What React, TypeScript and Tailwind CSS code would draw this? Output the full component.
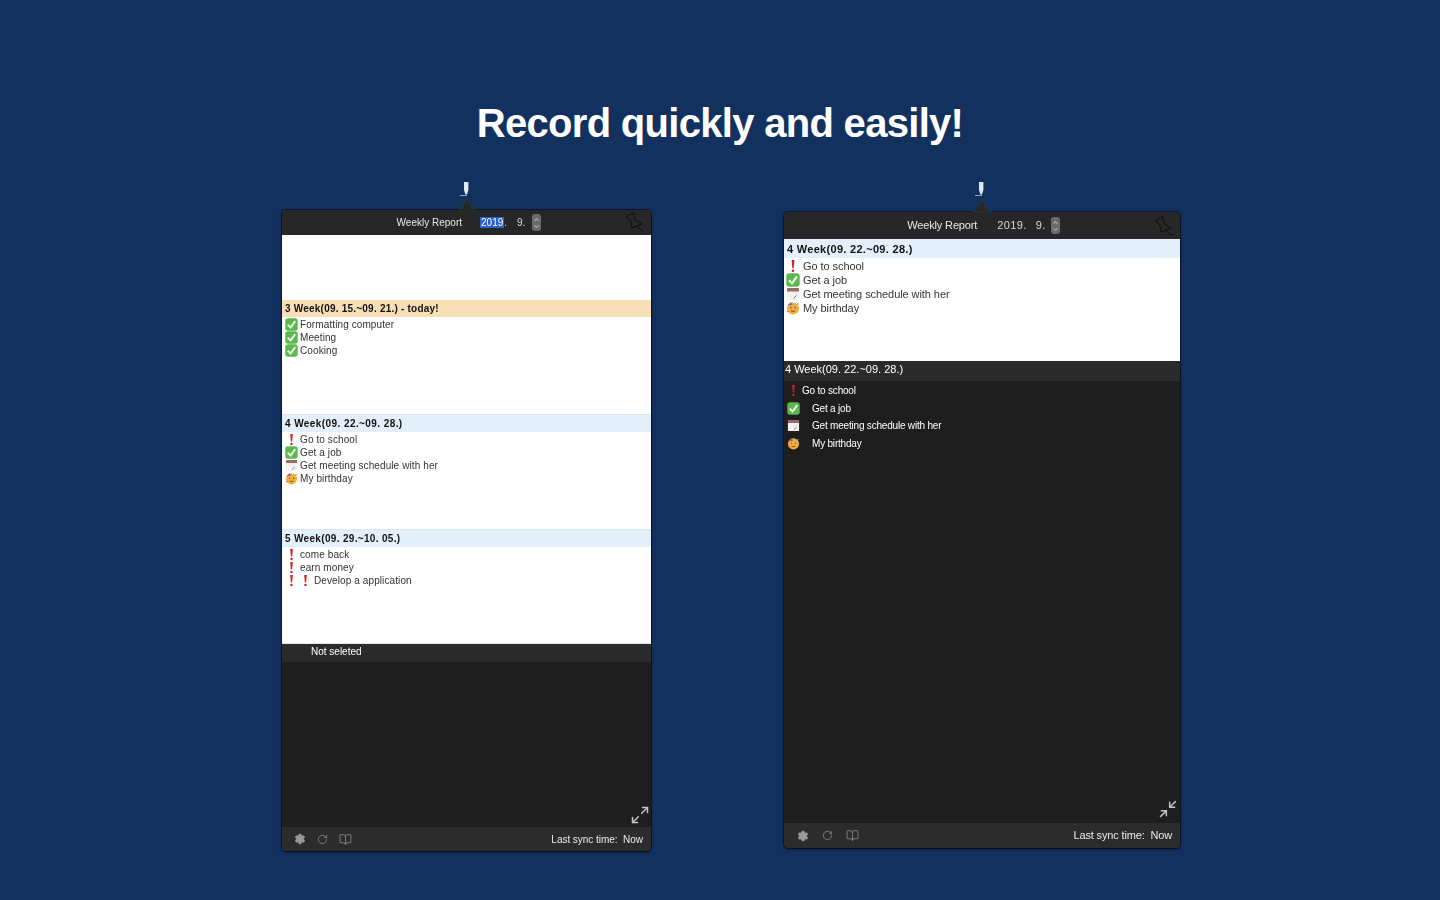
import { ReactNode } from "react";
import { BookOpen, ChevronDown, ChevronUp, Maximize2, Minimize2, RotateCw, Settings } from "lucide-react";

type Mark = "alert" | "check" | "calendar" | "party";

interface Task {
  marks: Mark[];
  text: string;
}

const THIRD_WEEK: Task[] = [
  { marks: ["check"], text: "Formatting computer" },
  { marks: ["check"], text: "Meeting" },
  { marks: ["check"], text: "Cooking" },
];

const FOURTH_WEEK: Task[] = [
  { marks: ["alert"], text: "Go to school" },
  { marks: ["check"], text: "Get a job" },
  { marks: ["calendar"], text: "Get meeting schedule with her" },
  { marks: ["party"], text: "My birthday" },
];

const FIFTH_WEEK: Task[] = [
  { marks: ["alert"], text: "come back" },
  { marks: ["alert"], text: "earn money" },
  { marks: ["alert", "alert"], text: "Develop a application" },
];

function MarkIcon({ mark, size }: { mark: Mark; size: number }) {
  if (mark === "alert") {
    return (
      <svg width={size} height={size} viewBox="0 0 14 14">
        <path d="M5.6 1h2.8L7.7 9.2H6.3z" fill="#dd1f1f" />
        <circle cx="7" cy="11.8" r="1.3" fill="#dd1f1f" />
      </svg>
    );
  }
  if (mark === "check") {
    return (
      <svg width={size} height={size} viewBox="0 0 14 14">
        <rect x="0.3" y="0.3" width="13.4" height="13.4" rx="3" fill="#5ab84d" />
        <path d="M3 7.2l3 3.2 5-7" fill="none" stroke="#f4fff0" strokeWidth="2" />
      </svg>
    );
  }
  if (mark === "calendar") {
    return (
      <svg width={size} height={size} viewBox="0 0 14 14">
        <rect x="1" y="1" width="12" height="12" rx="1" fill="#f2f2f2" />
        <path d="M1 2a1 1 0 0 1 1-1h10a1 1 0 0 1 1 1v2.4H1z" fill="#9b6a66" />
        <path d="M7.5 11.5l3-3" stroke="#777" strokeWidth="1" />
      </svg>
    );
  }
  return (
    <svg width={size} height={size} viewBox="0 0 14 14">
      <circle cx="7" cy="7.4" r="6" fill="#f0b040" />
      <path d="M1.5 4.5L5 1l1.5 3z" fill="#8a5cc4" />
      <circle cx="4.8" cy="6.6" r="0.8" fill="#7b4a1e" />
      <circle cx="9.2" cy="6.6" r="0.8" fill="#7b4a1e" />
      <path d="M5 9.8q2 1.4 4 0" fill="none" stroke="#7b4a1e" strokeWidth="1" />
      <circle cx="11.8" cy="3" r="0.8" fill="#5a8fe0" />
      <circle cx="2" cy="10.5" r="0.8" fill="#d8517a" />
    </svg>
  );
}

function PinIcon() {
  return (
    <svg width="18" height="20" viewBox="0 0 18 20" fill="none" stroke="#0c0c0c" strokeWidth="1" strokeLinejoin="round">
      <path d="M0.5 5L7.5 0.5l1.5 7 7 4.5-10 4-1-7z" />
      <path d="M10 14l7 5.5" />
    </svg>
  );
}

interface TitleBarProps {
  year: ReactNode;
  month: string;
  height: string;
  gap: string;
  label: string;
  stepper: string;
  pin: string;
}

function TitleBar({ year, month, height, gap, label, stepper, pin }: TitleBarProps) {
  return (
    <div className={`relative flex items-center justify-center rounded-t-[4px] bg-[#272727] ${height} ${gap}`}>
      <span className={label}>Weekly Report</span>
      <div className={`flex items-center text-[#d8d8d8] ${month}`}>
        {year}
        <span>9.</span>
      </div>
      <span className={`flex h-[17px] w-[9px] flex-col items-center justify-center rounded-[3px] bg-[#6a6a6a] text-[#e0e0e0] ${stepper}`}>
        <ChevronUp size={7} strokeWidth={3} />
        <ChevronDown size={7} strokeWidth={3} />
      </span>
      <span className={`absolute right-[7px] ${pin}`}>
        <PinIcon />
      </span>
    </div>
  );
}

function Pointer({ top, gap }: { top: string; gap: string }) {
  return (
    <div className={`absolute left-1/2 flex -translate-x-1/2 flex-col items-center ${top}`}>
      <svg width="14" height="14" viewBox="0 0 14 14" className="-ml-[2px]">
        <path d="M5 0h4.4v8L8 12.5H6.4L5 8z" fill="#e3e7ee" />
        <path d="M1 13.5h7" stroke="#8da3c4" strokeWidth="1" />
      </svg>
      <svg width="20" height="13" viewBox="0 0 20 13" className={gap}>
        <path d="M0 13C5 12 7 5 10 1c3 4 5 11 10 12z" fill="#272727" stroke="#444" strokeWidth="0.5" />
      </svg>
    </div>
  );
}

function Footer({ height, iconGap, padding, text }: { height: string; iconGap: string; padding: string; text: string }) {
  return (
    <div className={`flex items-center justify-between rounded-b-[4px] bg-[#2c2c2c] pr-[8px] text-[#e8e8e8] ${height} ${padding}`}>
      <div className={`flex items-center text-[#9a9a9a] ${iconGap}`}>
        <Settings size={12} fill="#9a9a9a" strokeWidth={2} />
        <RotateCw size={11} strokeWidth={1.5} />
        <BookOpen size={13} strokeWidth={1.3} />
      </div>
      <span className={text}>Last sync time:&nbsp; Now</span>
    </div>
  );
}

function WeekBlock({ title, tone, tasks, height }: { title: string; tone: string; tasks: Task[]; height: string }) {
  return (
    <div className={`border-b border-[#dfe5ea] ${height}`}>
      <div className={`flex h-[17px] items-center pl-[3px] text-[10px] font-bold text-[#111] ${tone}`}>{title}</div>
      <div className="pt-[1px] text-[#333]">
        {tasks.map((task) => (
          <TaskRow key={task.text} task={task} />
        ))}
      </div>
    </div>
  );
}

function TaskRow({ task }: { task: Task }) {
  return (
    <div className="flex h-[13px] items-center pl-[2px] text-[10px] tracking-[0.1px]">
      {task.marks.map((mark, i) => (
        <span key={i} className="flex w-[14px] shrink-0 justify-center">
          <MarkIcon mark={mark} size={13} />
        </span>
      ))}
      <span className="ml-[2px]">{task.text}</span>
    </div>
  );
}

function LeftPanel() {
  return (
    <div className="relative ml-[282px] mt-[210px] flex h-[641px] w-[369px] flex-col rounded-[4px] text-[10px] text-[#e8e8e8] shadow-[0_0_0_1px_rgba(0,0,0,0.45),0_1px_3px_rgba(0,0,0,0.6)] blur-[0.35px]">
      <Pointer top="-top-[28px]" gap="mt-[2px]" />
      <TitleBar
        height="h-[25px]"
        gap="gap-[18px] pl-[4.5px]"
        month="gap-[10px]"
        label=""
        stepper="-ml-[11.5px]"
        pin="top-[2px]"
        year={
          <span>
            <span className="bg-[#2b5fd0] px-[1px] text-white">2019</span>.
          </span>
        }
      />
      <div className="h-[65px] bg-white" />
      <div className="bg-white">
        <WeekBlock title="3 Week(09. 15.~09. 21.) - today!" tone="bg-[#f8dfb5] tracking-[0.22px]" tasks={THIRD_WEEK} height="h-[115px]" />
        <WeekBlock title="4 Week(09. 22.~09. 28.)" tone="bg-[#e3f0fb] tracking-[0.42px]" tasks={FOURTH_WEEK} height="h-[115px]" />
        <WeekBlock title="5 Week(09. 29.~10. 05.)" tone="bg-[#e3f0fb] tracking-[0.33px]" tasks={FIFTH_WEEK} height="h-[114px]" />
      </div>
      <div className="flex h-[18px] items-center bg-[#2b2b2b] pb-[3px] pl-[29px] text-white">Not seleted</div>
      <div className="flex flex-1 items-end justify-end bg-[#1e1e1e] pb-[2px] pr-[1px]">
        <Maximize2 size={20} strokeWidth={1.8} className="text-[#c4c4c4]" />
      </div>
      <Footer height="h-[24px]" iconGap="gap-[11px]" padding="pl-[12px]" text="tracking-[-0.03px]" />
    </div>
  );
}

function RightPanel() {
  return (
    <div className="relative ml-[133px] mt-[212px] flex h-[636px] w-[396px] flex-col rounded-[4px] text-[11px] text-[#e8e8e8] shadow-[0_0_0_1px_rgba(0,0,0,0.45),0_1px_3px_rgba(0,0,0,0.6)] blur-[0.35px]">
      <Pointer top="-top-[30px]" gap="mt-[3px]" />
      <TitleBar
        height="h-[27px]"
        gap="gap-[20px] pl-[3px]"
        month="gap-[9px] tracking-[0.4px]"
        label="tracking-[-0.15px]"
        stepper="-ml-[15px]"
        pin="top-[4px]"
        year={<span>2019.</span>}
      />
      <div className="h-[122px] bg-white">
        <div className="flex h-[19px] items-center bg-[#e3f0fb] pl-[3px] pt-[1px] font-bold tracking-[0.3px] text-[#111]">4 Week(09. 22.~09. 28.)</div>
        <div className="pt-[1px] text-[#333]">
          {FOURTH_WEEK.map((task) => (
            <div key={task.text} className="flex h-[14px] items-center pl-[2px] tracking-[-0.07px]">
              <span className="flex w-[14px] justify-center">
                <MarkIcon mark={task.marks[0]} size={14} />
              </span>
              <span className="ml-[3px]">{task.text}</span>
            </div>
          ))}
        </div>
      </div>
      <div className="flex h-[20px] items-center bg-[#2b2b2b] pb-[4px] pl-[1px] text-white">4 Week(09. 22.~09. 28.)</div>
      <div className="flex flex-1 flex-col bg-[#1e1e1e] pt-[1px] text-[10px] text-white">
        {FOURTH_WEEK.map((task, i) => (
          <div key={task.text} className="flex h-[17.6px] items-center pl-[2px] tracking-[-0.2px]">
            <span className="flex w-[14px] justify-center">
              <MarkIcon mark={task.marks[0]} size={13} />
            </span>
            <span className={i === 0 ? "ml-[2px]" : "ml-[12px]"}>{task.text}</span>
          </div>
        ))}
        <div className="mt-auto flex justify-end pb-[4px] pr-[2px]">
          <Minimize2 size={20} strokeWidth={1.8} className="text-[#c4c4c4]" />
        </div>
      </div>
      <Footer height="h-[25px]" iconGap="gap-[13px]" padding="pl-[13px]" text="tracking-[-0.15px]" />
    </div>
  );
}

export default function App() {
  return (
    <div className="relative h-[900px] w-[1440px] overflow-hidden bg-[#12315f] font-['Liberation_Sans',sans-serif]">
      <h1 className="absolute inset-x-0 top-[99px] text-center text-[40px] font-bold leading-[48px] tracking-[-0.7px] text-white">
        Record quickly and easily!
      </h1>
      <div className="flex items-start">
        <LeftPanel />
        <RightPanel />
      </div>
    </div>
  );
}
